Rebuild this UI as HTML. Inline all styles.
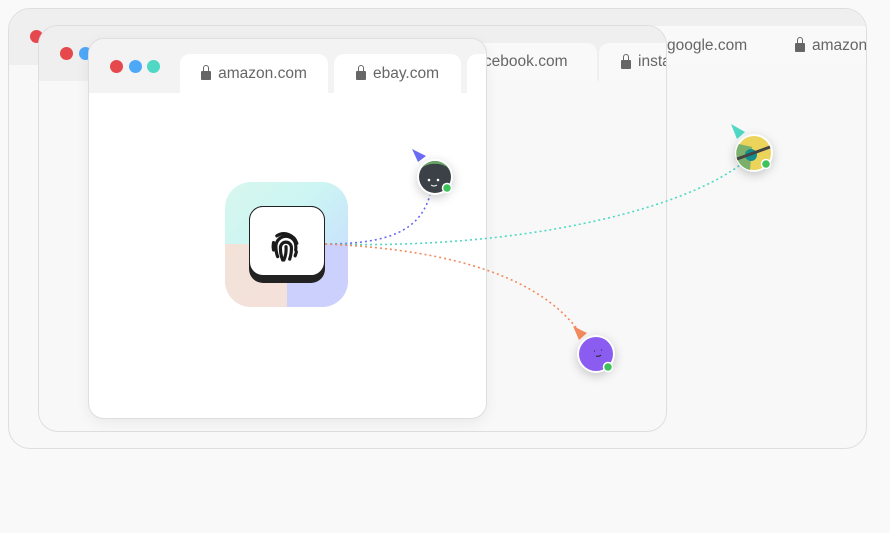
<!DOCTYPE html><html><head><style>
body{margin:0;width:890px;height:533px;background:#f9f9f9;font-family:"Liberation Sans",sans-serif;position:relative;overflow:hidden}
.w{position:absolute;border:1px solid #dedede;overflow:hidden;box-sizing:border-box}
.tab{position:absolute;background:#fafafa;border-radius:10px 10px 0 0;font-size:15.5px;color:#666;display:flex;align-items:center;justify-content:center;gap:7px;white-space:nowrap}
.lock{display:inline-block;width:10px;height:9px;background:#666;border-radius:1px;position:relative;margin-top:4px}
.lock:before{content:"";position:absolute;left:2px;top:-6px;width:4px;height:6px;border:1.5px solid #666;border-bottom:none;border-radius:4px 4px 0 0}
.dot{position:absolute;width:13px;height:13px;border-radius:50%}
</style></head><body>
<div class="w" style="left:8px;top:8px;width:859px;height:441px;border-radius:22px;background:#f8f8f8">
 <div style="position:absolute;left:0;top:0;right:0;height:56px;background:#efefef"></div>
 <div class="dot" style="left:21px;top:21px;background:#e5484d"></div>
 <div class="tab" style="left:627px;top:17px;width:130px;height:39px;background:#f9f9f9;justify-content:flex-start;padding-left:31px">google.com</div>
 <div class="tab" style="left:764px;top:17px;width:110px;height:39px;background:#f9f9f9;justify-content:flex-start;padding-left:22px"><span class="lock"></span>amazon.com</div>
</div>
<div class="w" style="left:38px;top:25px;width:629px;height:407px;border-radius:20px;background:#f8f8f8">
 <div style="position:absolute;left:0;top:0;right:0;height:55px;background:#efefef"></div>
 <div class="dot" style="left:21px;top:21px;background:#e5484d"></div>
 <div class="dot" style="left:40px;top:21px;background:#4ea8f8"></div>
 <div class="tab" style="left:428px;top:17px;width:126px;height:38px;background:#f9f9f9;justify-content:flex-start;padding-left:4px">facebook.com</div>
 <div class="tab" style="left:560px;top:17px;width:126px;height:38px;background:#f9f9f9;justify-content:flex-start;padding-left:22px"><span class="lock"></span>instagram.com</div>
</div>
<div class="w" style="left:88px;top:38px;width:399px;height:381px;border-radius:16px;background:#fff;box-shadow:0 4px 14px rgba(0,0,0,.06)">
 <div style="position:absolute;left:0;top:0;right:0;height:54px;background:#f3f3f3"></div>
 <div class="dot" style="left:21px;top:21px;background:#e5484d"></div>
 <div class="dot" style="left:40px;top:21px;background:#4ea8f8"></div>
 <div class="dot" style="left:58px;top:21px;background:#4fd8c4"></div>
 <div class="tab" style="left:91px;top:15px;width:148px;height:39px;background:#fff"><span class="lock"></span>amazon.com</div>
 <div class="tab" style="left:245px;top:15px;width:127px;height:39px;background:#fff"><span class="lock"></span>ebay.com</div>
 <div class="tab" style="left:378px;top:15px;width:40px;height:39px;background:#fff"></div>
</div>
<div style="position:absolute;left:225px;top:182px;width:123px;height:125px;border-radius:26px;overflow:hidden;background:linear-gradient(135deg,#d8f7ee 0%,#ccf5f3 40%,#c9e5fb 70%,#ccd2fd 100%)">
 <div style="position:absolute;left:0;top:62px;width:62px;height:63px;background:#f7e0d6;opacity:.9"></div>
 <div style="position:absolute;left:62px;top:62px;width:61px;height:63px;background:#ccd0fc"></div>
</div>
<div style="position:absolute;left:249px;top:206px;width:76px;height:77px;border-radius:14px;background:#222"></div>
<div style="position:absolute;left:249px;top:206px;width:76px;height:70px;border-radius:14px;background:#fff;border:1.5px solid #222;box-sizing:border-box"></div>
<svg style="position:absolute;left:266px;top:225px" width="40" height="40" viewBox="0 0 24 24" fill="none" stroke="#1a1a1a" stroke-width="1.9" stroke-linecap="round"><path d="M6.5 6.5a8 8 0 0 1 12 4.5"/><path d="M4.5 10.5c-.3 1.5-.3 3 0 4.5"/><path d="M7 19c-1-2.5-1.2-4.5-1-7a6 6 0 0 1 11.5-1.5c.5 1.5.5 3 .3 4.5"/><path d="M10 21c-1-2.5-1.5-5-1.3-8a3.3 3.3 0 0 1 6.5 0c.2 2.5-.2 5-1 7.5"/><path d="M12 13c.2 3-.3 6-1.3 8"/><path d="M17.5 18.5c.3-.8.6-1.6.7-2.5"/></svg>
<svg style="position:absolute;left:0;top:0" width="890" height="533">
<g fill="none" stroke-width="1.6" stroke-dasharray="2 3">
<path d="M325 244 C390 244 420 230 430 195" stroke="#6b6bf5"/>
<path d="M325 244 C520 250 680 210 740 165" stroke="#4fd8c4"/>
<path d="M325 244 C460 250 540 280 578 330" stroke="#f28a5e"/>
</g>
<path d="M412 149 L426 156 L418 162Z" fill="#6b6bf5"/>
<path d="M731 124 L745 132 L737 139Z" fill="#4fd8c4"/>
<path d="M573 326 L587 333 L579 340Z" fill="#f28a5e"/>
<g filter="drop-shadow(0 3px 5px rgba(0,0,0,.2))">
<circle cx="435" cy="177" r="18" fill="#fff"/><circle cx="754" cy="153" r="19" fill="#fff"/><circle cx="596" cy="354" r="19" fill="#fff"/></g>
<circle cx="435" cy="177" r="16" fill="#3c4148"/><path d="M419.5 173a16 16 0 0 1 31 0 15 9 0 0 0-31 0z" fill="#6aa86a"/>
<circle cx="429" cy="180" r="1.3" fill="#fff"/><circle cx="438" cy="180" r="1.3" fill="#fff"/><path d="M431 185q3 2 6 0" stroke="#fff" fill="none"/>
<circle cx="754" cy="153" r="17" fill="#ecd45a"/><path d="M739 144a17 17 0 0 0 11 26l2-23z" fill="#7bb06c"/><circle cx="751" cy="155" r="6" fill="#138d8d"/><path d="M737 159 L770 147" stroke="#444" stroke-width="3"/>
<circle cx="596" cy="354" r="17" fill="#8b5cf0"/><path d="M594 351h1M601 350h1M596 356q3 1 5-1" stroke="#222" fill="none"/>
<circle cx="447" cy="188" r="4.5" fill="#3ec35a" stroke="#fff" stroke-width="1.5"/>
<circle cx="766" cy="164" r="4.5" fill="#3ec35a" stroke="#fff" stroke-width="1.5"/>
<circle cx="608" cy="367" r="4.5" fill="#3ec35a" stroke="#fff" stroke-width="1.5"/>
</svg>
</body></html>
